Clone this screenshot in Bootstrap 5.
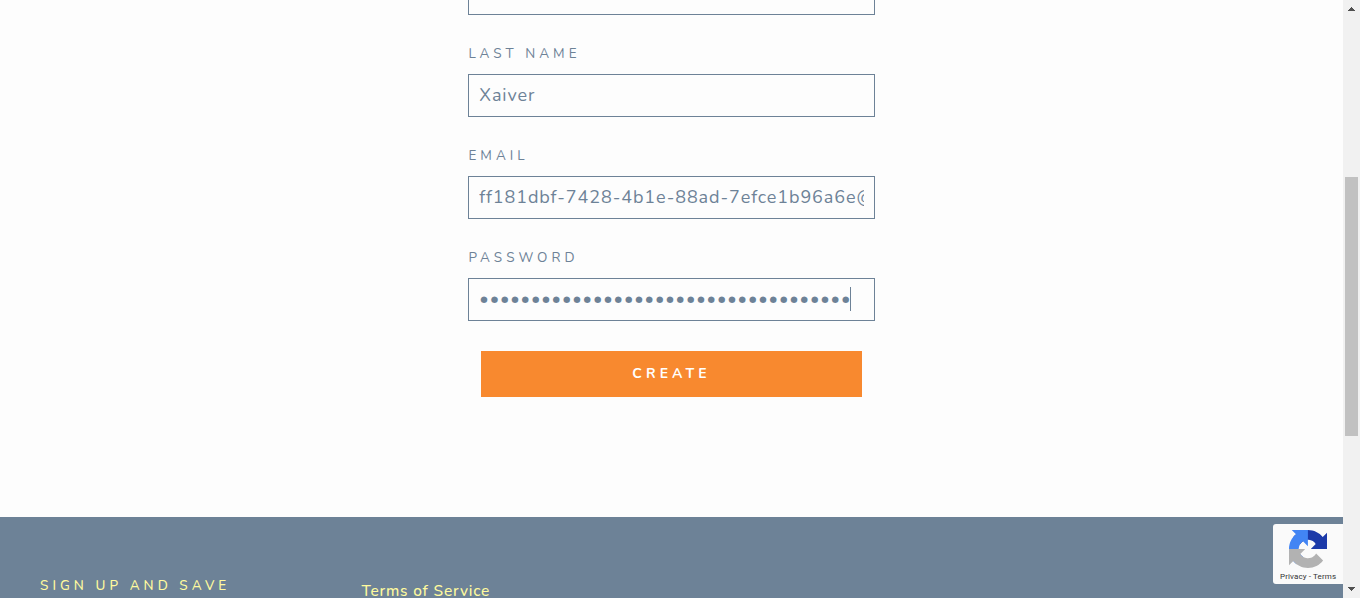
<!DOCTYPE html>
<html lang="en">
<head>
<meta charset="utf-8">
<meta name="viewport" content="width=device-width, initial-scale=1">
<title>Create account</title>
<link href="https://cdn.jsdelivr.net/npm/bootstrap@5.3.0/dist/css/bootstrap.min.css" rel="stylesheet">
<style>
  :root { --slate: #6d8297; --cream: #fffa9e; }
  body { height: 598px; background: #fdfdfd; color: var(--slate); font-family: Nunito, Lato, sans-serif; }
  .page { height: 598px; }
  .account { width: 407px; }
  .account label { display: block; font-size: 13.5px; line-height: 20px; height: 20px; letter-spacing: .3em; margin: 29px 0 10px; padding-left: .4px; white-space: nowrap; }
  .field { height: 43px; border: 1px solid var(--slate); padding: 0 10px; }
  .field.cut { height: 15px; border-top: 0; }
  .field-text { font-size: 18px; line-height: 40px; letter-spacing: .05em; padding-left: .3px; white-space: nowrap; overflow: hidden; width: 100%; }
  .secret { padding-bottom: 2px; }
  .dots { width: auto; overflow: visible; }
  .caret { width: 1px; height: 24px; background: var(--slate); margin-left: -1px; }
  .btn-create { width: 381px; height: 46px; margin-top: 30px; background: #f8892f; color: #fff; border: 0; border-radius: 0; font-size: 14px; font-weight: 700; letter-spacing: 4.1px; padding: 0 0 1px; }
  .btn-create:hover { background: #f8892f; color: #fff; }
  .site-footer { height: 81px; background: #6d8297; color: var(--cream); padding-left: 40px; }
  .signup { width: 321px; font-size: 13.5px; line-height: 20px; letter-spacing: .3em; padding-top: 59px; white-space: nowrap; }
  .terms { font-size: 15.5px; line-height: 17px; letter-spacing: .8px; padding: 65px 0 0 .4px; white-space: nowrap; color: var(--cream); text-decoration: none; }
  .signup, .terms { font-weight: 500; }
  .captcha { position: absolute; right: 0; bottom: 14px; width: 70px; height: 60px; background: #fafafa; border-radius: 3px 0 0 3px; color: #333; }
  .captcha svg { display: block; margin: 6px 0 0 16px; }
  .captcha-links { font: 8px/12px Roboto, sans-serif; letter-spacing: .12px; margin: 3px 0 0 7px; white-space: nowrap; }
  .scroll-track { width: 17px; background: #f1f1f1; }
  .scroll-thumb { width: 13px; height: 259px; background: #c1c1c1; margin: 160px 2px 0; }
</style>
</head>
<body class="overflow-hidden">
<div class="page d-flex">
  <div class="flex-grow-1 d-flex flex-column position-relative overflow-hidden">
    <main class="flex-grow-1">
      <form class="account mx-auto d-flex flex-column">
        <div class="field cut"></div>
        <label>LAST NAME</label>
        <div class="field"><div class="field-text">Xaiver</div></div>
        <label>EMAIL</label>
        <div class="field"><div class="field-text">ff181dbf-7428-4b1e-88ad-7efce1b96a6e@</div></div>
        <label>PASSWORD</label>
        <div class="field secret d-flex align-items-center"><div class="field-text dots">••••••••••••••••••••••••••••••••••••</div><div class="caret"></div></div>
        <button type="button" class="btn btn-create mx-auto">CREATE</button>
      </form>
    </main>
    <footer class="site-footer d-flex overflow-hidden">
      <div class="signup">SIGN UP AND SAVE</div>
      <a class="terms" href="#">Terms of Service</a>
    </footer>
    <div class="captcha">
      <svg width="38" height="38" viewBox="0 0 64 64">
        <path fill="#1c3aa9" d="M64 31.955l-.033-1.37V4.687l-7.16 7.16C50.948 4.674 42.033.093 32.05.093c-10.4 0-19.622 4.96-25.458 12.64l11.736 11.86a15.55 15.55 0 0 1 4.754-5.334c2.05-1.6 4.952-2.906 8.968-2.906.485 0 .86.057 1.135.163 4.976.393 9.288 3.14 11.828 7.124l-8.307 8.307L64 31.953"/>
        <path fill="#4285f4" d="M31.862.094l-1.37.033H4.594l7.16 7.16C4.58 13.147 0 22.06 0 32.046c0 10.4 4.96 19.622 12.64 25.458L24.5 45.768a15.55 15.55 0 0 1-5.334-4.754c-1.6-2.05-2.906-4.952-2.906-8.968 0-.485.057-.86.163-1.135.393-4.976 3.14-9.288 7.124-11.828l8.307 8.307L31.86.095"/>
        <path fill="#b2b2b2" d="M.001 32.045l.033 1.37v25.898l7.16-7.16c5.86 7.173 14.774 11.754 24.76 11.754 10.4 0 19.622-4.96 25.458-12.64l-11.736-11.86a15.55 15.55 0 0 1-4.754 5.334c-2.05 1.6-4.952 2.906-8.968 2.906-.485 0-.86-.057-1.135-.163-4.976-.393-9.288-3.14-11.828-7.124l8.307-8.307c-10.522.04-22.4.066-27.295-.005"/>
      </svg>
      <div class="captcha-links">Privacy - Terms</div>
    </div>
  </div>
  <div class="scroll-track d-flex flex-column">
    <svg width="17" height="17" viewBox="0 0 17 17" shape-rendering="crispEdges"><path fill="#505050" d="M8 7h1v1h1v1h1v1h1v1H5v-1h1V9h1V8h1z"/></svg>
    <div class="scroll-thumb"></div>
    <svg class="mt-auto" width="17" height="17" viewBox="0 0 17 17" shape-rendering="crispEdges"><path fill="#505050" d="M5 6h7v1h-1v1h-1v1H9v1H8V9H7V8H6V7H5z"/></svg>
  </div>
</div>
<script src="https://cdn.jsdelivr.net/npm/bootstrap@5.3.0/dist/js/bootstrap.bundle.min.js"></script>
</body>
</html>
